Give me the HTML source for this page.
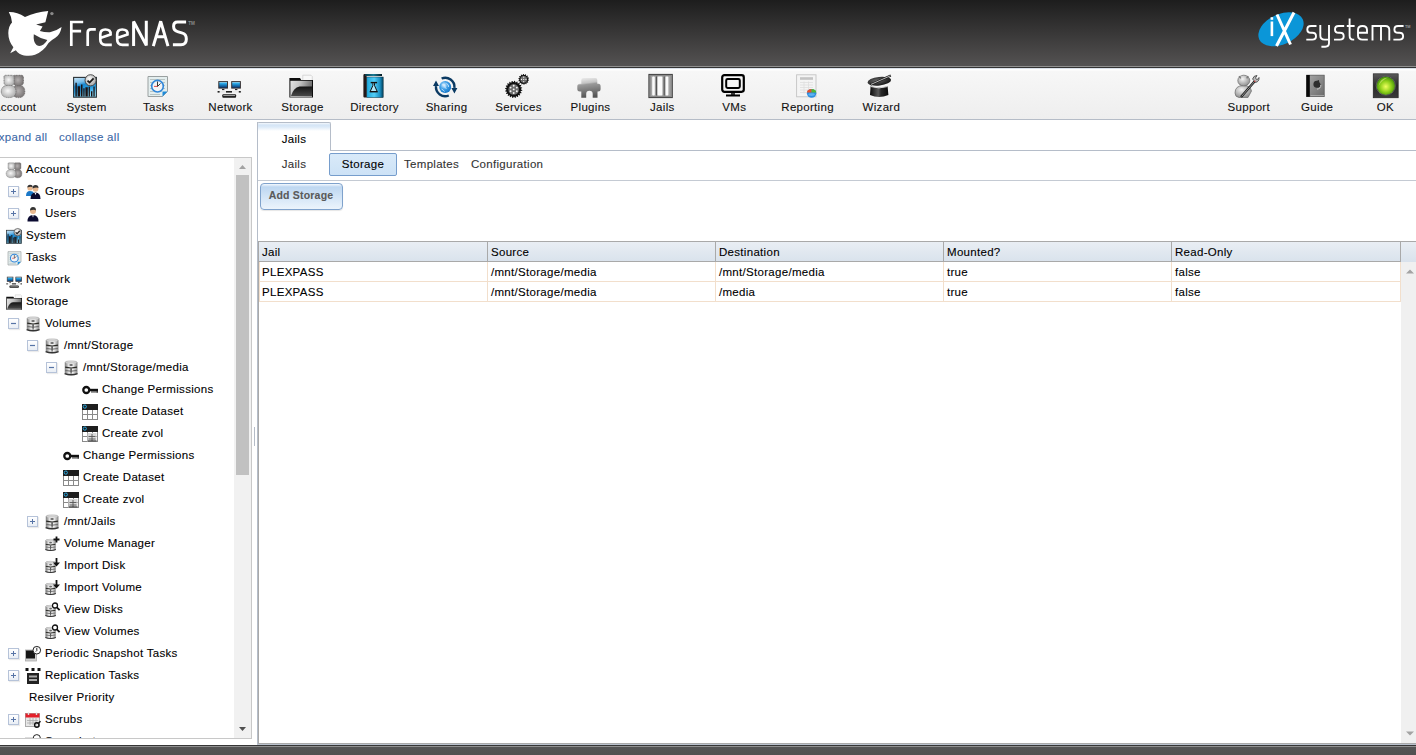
<!DOCTYPE html><html><head><meta charset="utf-8"><style>
*{box-sizing:border-box}
html,body{margin:0;padding:0}
body{width:1416px;height:755px;overflow:hidden;position:relative;background:#fff;font-family:"Liberation Sans", sans-serif;font-size:11.5px;letter-spacing:0.3px;color:#000}
.a{position:absolute}
.t{position:absolute;white-space:nowrap;line-height:14px;height:14px;-webkit-text-stroke:0.1px currentColor}
svg.ic{position:absolute;overflow:visible} symbol{overflow:visible}
</style></head><body><div class="a" style="left:0;top:0;width:1416px;height:66px;background:linear-gradient(#1d1d1d,#545252)"></div>
<div class="a" style="left:0;top:66px;width:1416px;height:1px;background:#8f8f8f"></div>
<div class="a" style="left:0;top:67px;width:1416px;height:1px;background:#333"></div>
<div class="a" style="left:0;top:68px;width:1416px;height:51px;background:linear-gradient(#d9dfe8 0px,#d9dfe8 1px,#fff 1px,#fff 2px,#f7f7f7 3px,#eeeeee 51px)"></div>
<div class="a" style="left:0;top:119px;width:1416px;height:1px;background:#b5bcc7"></div>
<svg class="ic" style="left:0;top:0" width="200" height="66" viewBox="0 0 200 66">
<path fill="#fff" fill-rule="evenodd" d="M8.8 12 Q17 11.8 25 17.1 Q36 12 48.2 11.1 L45.4 22.2 L36.1 24.6 L42.6 26.4 L39.9 31 Q45 32.6 50 32.3 Q56 31 61.6 26.9 Q60.5 33 57.5 36.1 Q55 38.5 52 39.9 L48.5 43 Q44 51 35 54.8 Q30.6 56.5 24 55.5 Q19 54.5 15.8 50.3 L10.2 53.3 L13.4 47.3 Q8.3 41 8.3 33 Q8.5 26 12 22.5 Q11.5 16.5 8.8 12Z M33.8 34.3 Q33 42 36.5 45 Q40 47 43.5 44.5 Q46 42.5 47.3 39.9 Q40 38.5 33.8 34.3Z"/>
<circle cx="51.9" cy="13.6" r="1.7" fill="#8a8a8a"/>
<g fill="none" stroke="#fff" stroke-width="2.7" stroke-linejoin="miter">
<path d="M71.3 46.1 V22 H83.2 M71.3 31.1 H81.1"/>
<path d="M87.7 46.1 V32.5 Q87.7 29.3 91 29.3 H95.8"/>
<path d="M100.3 38 L110.6 34.6 Q111.2 29.5 105.3 29.5 Q100.3 29.5 100.3 34.5 V39.5 Q100.3 44.8 105.6 44.8 H111.8"/>
<path d="M117.2 38 L127.5 34.6 Q128.1 29.5 122.2 29.5 Q117.2 29.5 117.2 34.5 V39.5 Q117.2 44.8 122.5 44.8 H128.7"/>
</g>
<g fill="none" stroke="#fff" stroke-width="3" stroke-linejoin="bevel">
<path d="M133.6 46.1 V21.5 L146.3 45.4 V20.8"/>
<path d="M153.3 46.1 L160.7 21.3 L168 46.1 M155.5 36.8 H165.9"/>
<path d="M186.1 22.1 H177.5 Q173.6 22.1 173.6 26.3 Q173.6 30.6 177.5 31.6 L182.5 33.1 Q186.3 34.2 186.3 38.5 V39.6 Q186.3 44.7 181 44.7 H172.9"/>
</g>
<text x="188.3" y="24.5" font-family="Liberation Sans" font-size="4.6" font-weight="bold" fill="#8a8a8a" letter-spacing="0">TM</text>
</svg>
<svg class="ic" style="left:1250px;top:5px" width="166" height="50" viewBox="1250 5 166 50">
<ellipse cx="1281" cy="29.3" rx="24" ry="15" transform="rotate(-25 1281 29.3)" fill="#0b96d8"/>
<rect x="1270.6" y="21.5" width="2.6" height="14.6" fill="#fff"/><rect x="1270.6" y="17.2" width="2.6" height="2.6" fill="#fff"/>
<path d="M1277 14.5 L1290.5 44.5 M1294 12.5 L1276.5 46" stroke="#fff" stroke-width="3" fill="none"/>
<g fill="none" stroke="#fff" stroke-width="1.9">
<path id="ss" d="M1316.5 26 H1311 Q1307.3 26 1307.3 29.4 Q1307.3 32.8 1311 32.8 H1312.3 Q1316 32.8 1316 36.2 Q1316 39.6 1312.3 39.6 H1306.3"/>
<path d="M1320.3 25.1 V35.5 Q1320.3 39.6 1324.5 39.6 H1329 M1329 25.1 V43 Q1329 46.7 1325.3 46.7 H1321.4"/>
<use href="#ss" x="27.7"/>
<path d="M1349.6 18.4 V35.5 Q1349.6 39.6 1353 39.6 H1354.2 M1346.8 26 H1354.6"/>
<path d="M1358 32.8 H1367 V30 Q1367 26 1362.5 26 Q1358 26 1358 30 V35.5 Q1358 39.6 1362.5 39.6 H1367.8"/>
<path d="M1372.5 40.5 V26 H1385.3 Q1389.3 26 1389.3 30 V40.5 M1381 26 V40.5"/>
<use href="#ss" x="87.1"/>
</g>
<text x="1405" y="28.3" font-family="Liberation Sans" font-size="3.8" font-weight="bold" fill="#9a9a9a" letter-spacing="0">TM</text>
</svg>
<svg width="0" height="0" style="position:absolute"><defs><symbol id="i-account" viewBox="0 0 24 24">
<defs><radialGradient id="gA1" cx=".45" cy=".45" r=".6"><stop offset="0" stop-color="#f8f8f8"/><stop offset="1" stop-color="#aaaaaa"/></radialGradient>
<radialGradient id="gA2" cx=".45" cy=".45" r=".6"><stop offset="0" stop-color="#b4b0b0"/><stop offset="1" stop-color="#767272"/></radialGradient></defs>
<path d="M12 16 Q12 11.3 17.5 11.3 Q23.8 11.3 23.8 17.5 Q23.8 23.6 17.5 23.6 Q12 23.6 12 19Z" fill="url(#gA2)" stroke="#5e5a5a" stroke-width=".8" stroke-dasharray="1 .6"/>
<path d="M12.4 3 Q12.4 1.3 14 1.3 H20.6 Q22.4 1.3 22.4 3.2 V8.5 Q22.4 11.8 17.4 11.8 Q12.4 11.8 12.4 8.5Z" fill="url(#gA2)" stroke="#5e5a5a" stroke-width=".8" stroke-dasharray="1 .6"/>
<path d="M3 3 Q3 1.3 4.6 1.3 H11.4 Q13.2 1.3 13.2 3.2 V8.5 Q13.2 11.8 8.1 11.8 Q3 11.8 3 8.5Z" fill="url(#gA1)" stroke="#6a6a6a" stroke-width=".8" stroke-dasharray="1 .6"/>
<path d="M0.3 17.5 Q0.3 11.3 7.8 11.3 Q15 11.3 15 17.5 Q15 23.6 7.8 23.6 Q0.3 23.6 0.3 17.5Z" fill="url(#gA1)" stroke="#6a6a6a" stroke-width=".8" stroke-dasharray="1 .6"/>
</symbol><symbol id="i-system" viewBox="0 0 24 24">
<defs><linearGradient id="gS1" x1="0" y1="0" x2=".3" y2="1"><stop offset="0" stop-color="#d0e8f8"/><stop offset=".3" stop-color="#78bce8"/><stop offset=".45" stop-color="#1a88d0"/><stop offset=".7" stop-color="#2a9ee0"/><stop offset="1" stop-color="#8adcfc"/></linearGradient>
<radialGradient id="gS2" cx=".4" cy=".35" r=".7"><stop offset="0" stop-color="#fcfcfc"/><stop offset="1" stop-color="#a0a0a0"/></radialGradient></defs>
<rect x="0.6" y="3.4" width="22.8" height="19.8" fill="url(#gS1)" stroke="#2a3236" stroke-width="1.1"/>
<path d="M2.4 22.6 V8.8 h1.4 V22.6Z M4.6 22.6 V12.2 h2.6 V22.6Z M8 22.6 V10.5 h1.5 V22.6Z M10.3 22.6 V14.3 h1.3 V22.6Z M12.4 22.6 V13.2 h2.4 V22.6Z M15.6 22.6 V12.8 h1.3 V22.6Z M18 22.6 V17.2 h1.4 V22.6Z M20.4 22.6 V12.5 h1.3 V22.6Z" fill="#1c1212"/>
<circle cx="17.6" cy="6.3" r="5.6" fill="url(#gS2)" stroke="#3a3a3a" stroke-width=".9"/>
<path d="M14.5 6.6 l2.1 2 l4-4.2" fill="none" stroke="#1a1a1a" stroke-width="1.8"/>
</symbol><symbol id="i-tasks" viewBox="0 0 24 24">
<path d="M3 2.5 h19.5 v15 l-5 5 H3Z" fill="#e4eeee" stroke="#9aa0a0" stroke-width="1"/>
<path d="M5 5.5 h15 M5 8.5 h15 M5 11.5 h15 M5 14.5 h15 M5 17.5 h12 M5 20.5 h10" stroke="#b9c4c4" stroke-width="1"/>
<path d="M17.5 22.5 l5-5 h-5Z" fill="#1e8ad8"/>
<circle cx="12.5" cy="12.2" r="5.8" fill="#f2f4f6" stroke="#2f86da" stroke-width="1.6"/>
<path d="M12.5 12.5 V7.5 M12.5 12.5 l3-3" stroke="#222" stroke-width=".9"/><path d="M12.5 12.4 h-3.5" stroke="#e03838" stroke-width=".9"/>
</symbol><symbol id="i-network" viewBox="0 0 24 24">
<defs><linearGradient id="gN1" x1="0" y1="0" x2="0" y2="1"><stop offset="0" stop-color="#d8f4ff"/><stop offset=".3" stop-color="#28a8e8"/><stop offset="1" stop-color="#022a68"/></linearGradient>
<linearGradient id="gN2" x1="0" y1="0" x2="0" y2="1"><stop offset="0" stop-color="#e0e0e0"/><stop offset="1" stop-color="#303030"/></linearGradient></defs>
<rect x="1.8" y="7.6" width="8.7" height="6.5" fill="url(#gN1)" stroke="#3a3434" stroke-width="1"/>
<rect x="14.7" y="7.6" width="8.7" height="6.5" fill="url(#gN1)" stroke="#3a3434" stroke-width="1"/>
<path d="M5 15.6 h2.4 M18 15.6 h2.4" stroke="#111" stroke-width="1"/>
<rect x="0.3" y="16.9" width="23.9" height="1.8" fill="#e8e8e8"/>
<rect x="0.6" y="17" width="2" height="1.6" fill="#222"/><rect x="9" y="17" width="6" height="1.6" fill="#222"/><rect x="21.8" y="17" width="2" height="1.6" fill="#222"/>
<rect x="5.3" y="20.2" width="13.8" height="3.6" rx="1" fill="#1a1a1a"/><rect x="6.3" y="21" width="11.8" height="1.3" fill="url(#gN2)"/>
</symbol><symbol id="i-storage" viewBox="0 0 24 24">
<defs><linearGradient id="gF1" x1="0" y1="0" x2="1" y2=".3"><stop offset="0" stop-color="#e4e4e4"/><stop offset=".45" stop-color="#c4c4c4"/><stop offset="1" stop-color="#6a6a6a"/></linearGradient>
<linearGradient id="gF2" x1="0" y1="0" x2="0" y2="1"><stop offset="0" stop-color="#141414"/><stop offset="1" stop-color="#4a4a4a"/></linearGradient></defs>
<path d="M13.8 1.2 h8.2 l1.3 1.3 V7 H13.8Z" fill="#f8f8f8" stroke="#c4c4c4" stroke-width=".6"/>
<path d="M0.4 4.1 H11 L12.2 6 H24 V23.6 H0.4Z" fill="#0e0e0e"/>
<rect x="1.4" y="6.8" width="21.6" height="16" fill="url(#gF1)"/>
<path d="M1.8 22.4 Q4.5 13.2 10.5 12.4 H23 V22.4Z" fill="url(#gF2)"/>
<path d="M1.4 22.7 H23" stroke="#e8e8e8" stroke-width=".6"/>
</symbol><symbol id="i-directory" viewBox="0 0 24 24">
<defs><linearGradient id="gD1" x1="0" y1="0" x2="1" y2="0"><stop offset="0" stop-color="#1ea8dc"/><stop offset=".45" stop-color="#52cdf6"/><stop offset=".8" stop-color="#1a90c4"/><stop offset="1" stop-color="#04405c"/></linearGradient>
<linearGradient id="gD2" x1="0" y1="0" x2="1" y2="0"><stop offset="0" stop-color="#0a3a48"/><stop offset=".5" stop-color="#1a7a94"/><stop offset="1" stop-color="#061a22"/></linearGradient></defs>
<path d="M2.4 1.2 Q2.4 0 3.6 0 H21 V2 H5.8 V23.6 H3.4 Q2.4 23.6 2.4 22.6Z" fill="#221818"/>
<rect x="4" y="0" width="17" height="2" fill="url(#gD2)"/>
<rect x="5.8" y="2" width="16.4" height="1" fill="#fafafa"/>
<rect x="5.8" y="3" width="16.4" height="20.6" fill="url(#gD1)" stroke="#0e2a36" stroke-width=".5"/>
<path d="M11.9 9.2 V11.5 L9.2 17.5 H16.2 L13.5 11.5 V9.2" fill="#aee6f8" stroke="#111" stroke-width="1"/>
<rect x="9.7" y="7.9" width="6.4" height="1.4" fill="#111"/><rect x="8.7" y="17.3" width="8" height="1.1" fill="#161010"/>
</symbol><symbol id="i-sharing" viewBox="0 0 24 24">
<defs><radialGradient id="gSh" cx=".4" cy=".35" r=".65"><stop offset="0" stop-color="#e6f4ff"/><stop offset=".5" stop-color="#3fa0e8"/><stop offset="1" stop-color="#1878c8"/></radialGradient></defs>
<circle cx="12.2" cy="13" r="6" fill="url(#gSh)"/>
<path d="M9 11 q2-1.5 3 0.5 q-1 2.5 1.5 3 M13.5 9.5 q2.5 1 2 3.5 M8.5 15 q2 1 3 2.5" stroke="#d8eeff" stroke-width=".8" fill="none"/>
<path d="M8.6 4.5 A9.2 9.2 0 0 1 21.4 13.8" fill="none" stroke="#0b3a63" stroke-width="2.4"/>
<path d="M15.8 21.5 A9.2 9.2 0 0 1 3.0 12.2" fill="none" stroke="#0b3a63" stroke-width="2.4"/>
<path d="M18.4 14 L24.4 14 L21.4 19.5Z M0 12 L6 12 L3 6.5Z" fill="#0b3a63"/>
</symbol><symbol id="i-services" viewBox="0 0 24 24"><polygon points="16.00,15.40 17.27,16.07 17.19,16.75 15.80,17.10 15.64,17.66 16.65,18.69 16.36,19.30 14.92,19.21 14.61,19.69 15.24,20.99 14.78,21.48 13.44,20.95 12.99,21.31 13.19,22.73 12.60,23.06 11.49,22.14 10.96,22.34 10.71,23.76 10.05,23.89 9.27,22.68 8.70,22.70 8.03,23.97 7.35,23.89 7.00,22.50 6.44,22.34 5.41,23.35 4.80,23.06 4.89,21.62 4.41,21.31 3.11,21.94 2.62,21.48 3.15,20.14 2.79,19.69 1.37,19.89 1.04,19.30 1.96,18.19 1.76,17.66 0.34,17.41 0.21,16.75 1.42,15.97 1.40,15.40 0.13,14.73 0.21,14.05 1.60,13.70 1.76,13.14 0.75,12.11 1.04,11.50 2.48,11.59 2.79,11.11 2.16,9.81 2.62,9.32 3.96,9.85 4.41,9.49 4.21,8.07 4.80,7.74 5.91,8.66 6.44,8.46 6.69,7.04 7.35,6.91 8.13,8.12 8.70,8.10 9.37,6.83 10.05,6.91 10.40,8.30 10.96,8.46 11.99,7.45 12.60,7.74 12.51,9.18 12.99,9.49 14.29,8.86 14.78,9.32 14.25,10.66 14.61,11.11 16.03,10.91 16.36,11.50 15.44,12.61 15.64,13.14 17.06,13.39 17.19,14.05 15.98,14.83" fill="#111"/><circle cx="8.7" cy="15.4" r="5.3" fill="#6e6e6e"/><circle cx="8.70" cy="19.00" r="0.95" fill="#f4f4f4"/><circle cx="5.58" cy="17.20" r="0.95" fill="#f4f4f4"/><circle cx="5.58" cy="13.60" r="0.95" fill="#f4f4f4"/><circle cx="8.70" cy="11.80" r="0.95" fill="#f4f4f4"/><circle cx="11.82" cy="13.60" r="0.95" fill="#f4f4f4"/><circle cx="11.82" cy="17.20" r="0.95" fill="#f4f4f4"/><circle cx="8.7" cy="15.4" r="0.95" fill="#f4f4f4"/><polygon points="23.10,5.40 24.07,6.00 23.96,6.60 22.85,6.85 22.66,7.31 23.27,8.27 22.92,8.77 21.81,8.51 21.44,8.84 21.57,9.97 21.04,10.27 20.15,9.55 19.68,9.69 19.30,10.77 18.70,10.80 18.21,9.77 17.72,9.69 16.92,10.50 16.36,10.27 16.36,9.13 15.96,8.84 14.88,9.22 14.48,8.77 14.97,7.74 14.74,7.31 13.60,7.18 13.44,6.60 14.33,5.89 14.30,5.40 13.33,4.80 13.44,4.20 14.55,3.95 14.74,3.49 14.13,2.53 14.48,2.03 15.59,2.29 15.96,1.96 15.83,0.83 16.36,0.53 17.25,1.25 17.72,1.11 18.10,0.03 18.70,0.00 19.19,1.03 19.68,1.11 20.48,0.30 21.04,0.53 21.04,1.67 21.44,1.96 22.52,1.58 22.92,2.03 22.43,3.06 22.66,3.49 23.80,3.62 23.96,4.20 23.07,4.91" fill="#111"/><circle cx="18.7" cy="5.4" r="3.3" fill="#6e6e6e"/><circle cx="18.70" cy="7.64" r="0.6" fill="#f4f4f4"/><circle cx="16.46" cy="5.40" r="0.6" fill="#f4f4f4"/><circle cx="18.70" cy="3.16" r="0.6" fill="#f4f4f4"/><circle cx="20.94" cy="5.40" r="0.6" fill="#f4f4f4"/><circle cx="18.7" cy="5.4" r="0.6" fill="#f4f4f4"/></symbol><symbol id="i-plugins" viewBox="0 0 24 24">
<defs><linearGradient id="gP1" x1="0" y1="0" x2=".15" y2="1"><stop offset="0" stop-color="#f0f0f0"/><stop offset=".3" stop-color="#c4c4c4"/><stop offset=".38" stop-color="#9a9a9a"/><stop offset="1" stop-color="#555"/></linearGradient></defs>
<path d="M6.5 4 H18.5 Q20.3 4 20.3 6 V9.8 H21.5 Q23.6 9.8 23.6 12.5 V15 Q23.6 17.5 21 17.5 H20.5 V23.8 H15.7 V20 Q15.7 16.8 12.4 16.8 Q9.2 16.8 9.2 20 V23.8 H4.3 V17.5 H3 Q0.3 17.5 0.3 15 V12.5 Q0.3 9.8 3 9.8 H4.3 V6 Q4.3 4 6.5 4Z" fill="url(#gP1)"/>
</symbol><symbol id="i-jails" viewBox="0 0 24 24">
<rect x="-0.1" y="0.4" width="23.4" height="23.2" fill="#a4a4a4" stroke="#3c3c3c" stroke-width="1"/>
<rect x="1.2" y="1.7" width="20.8" height="20.6" fill="none" stroke="#7a7a7a" stroke-width=".6"/>
<rect x="3.2" y="2.6" width="2.6" height="18.8" rx="1" fill="#fbfbfb"/>
<rect x="8.6" y="2.6" width="4.8" height="18.8" rx="1" fill="#fbfbfb"/>
<rect x="16.6" y="2.6" width="2.8" height="18.8" rx="1" fill="#fbfbfb"/>
<path d="M7.4 2.4 V21.6 M15.2 2.4 V21.6" stroke="#4a4a4a" stroke-width="1"/>
</symbol><symbol id="i-vms" viewBox="0 0 24 24">
<rect x="1.2" y="1.2" width="21.6" height="16.6" rx="2.2" fill="none" stroke="#000" stroke-width="2.2"/>
<rect x="5.2" y="5" width="13.6" height="9" rx="1.4" fill="none" stroke="#000" stroke-width="2"/>
<path d="M11 19 v2 M13 19 v2" stroke="#000" stroke-width="1.5"/><rect x="5" y="20.5" width="14" height="2" fill="#000"/>
</symbol><symbol id="i-reporting" viewBox="0 0 24 24">
<rect x="2.6" y="0.8" width="19.4" height="22" fill="#f4f4f4" stroke="#c4c4c4" stroke-width=".9"/>
<rect x="6" y="3.2" width="13" height="2.6" fill="#c4c4c4"/>
<path d="M6 8.5 h13 M6 11 h13 M6 13.5 h13 M6 16 h9 M6 18.5 h8 M10 7.5 v12 M14.5 7.5 v8" stroke="#dedede" stroke-width=".8"/>
<ellipse cx="17.6" cy="19.3" rx="4.7" ry="4.4" fill="#2e8ee0"/>
<path d="M12.9 18.6 A4.7 4 0 0 1 17.6 14.9 L17.6 18.6Z" fill="#e8502a"/>
<path d="M17.6 14.9 A4.7 4 0 0 1 22.3 18.6 L17.6 18.6Z" fill="#52b830"/>
<ellipse cx="17.6" cy="20.6" rx="3.2" ry="1.4" fill="#8fd8ff" opacity=".5"/>
</symbol><symbol id="i-wizard" viewBox="0 0 24 24">
<defs><linearGradient id="gW1" x1="0" y1="0" x2="1" y2="0"><stop offset="0" stop-color="#0a0a0a"/><stop offset=".45" stop-color="#5a5a5a"/><stop offset=".6" stop-color="#2a2a2a"/><stop offset="1" stop-color="#0a0a0a"/></linearGradient>
<radialGradient id="gW2" cx=".4" cy=".4" r=".6"><stop offset="0" stop-color="#666"/><stop offset="1" stop-color="#1a1a1a"/></radialGradient></defs>
<ellipse cx="11.3" cy="7.2" rx="11.8" ry="4.3" transform="rotate(-6 11.3 7.2)" fill="url(#gW2)"/>
<path d="M2.6 12.2 Q11 14.8 19.6 12.2 L20.4 21 Q11 25.2 2 21Z" fill="url(#gW1)"/>
<path d="M3 12.6 Q11 15.2 19.4 12.6" stroke="#d8d8d8" stroke-width="1" fill="none"/>
<path d="M2.5 10.8 L22.8 1.6" stroke="#1a1a1a" stroke-width="2.2"/><path d="M3 10.4 L22.3 1.8" stroke="#e0e0e0" stroke-width=".8"/>
</symbol><symbol id="i-support" viewBox="0 0 24 24">
<defs><radialGradient id="gSu" cx=".4" cy=".35" r=".7"><stop offset="0" stop-color="#f4f4f4"/><stop offset="1" stop-color="#8a8a8a"/></radialGradient></defs>
<path d="M0 19 Q0 11.5 8.5 11.5 Q15.5 11.5 16.5 17 L13 23.5 H4 Q0 23 0 19Z" fill="url(#gSu)" stroke="#6a6a6a" stroke-width=".7"/>
<ellipse cx="8.8" cy="6.6" rx="6" ry="5.4" fill="url(#gSu)" stroke="#6a6a6a" stroke-width=".7"/>
<path d="M4 2.2 l1.8 2.2 M13.2 2 l-1.5 2.4" stroke="#7a7a7a" stroke-width="1.4"/>
<path d="M6 23 L19.5 7.5" stroke="#1a1a1a" stroke-width="2.4"/><path d="M6.6 22.4 L19 8.1" stroke="#c8c8c8" stroke-width=".7"/>
<path d="M17.6 5 Q18.5 1.5 22 1.5 L20.5 4 L22 5.8 L24 3.5 Q24.5 7.5 20.5 8.5Z" fill="#b8b8b8" stroke="#3a3a3a" stroke-width=".8"/>
<circle cx="19.8" cy="7.2" r=".8" fill="#d04040"/>
</symbol><symbol id="i-guide" viewBox="0 0 24 24">
<defs><linearGradient id="gG1" x1="0" y1="0" x2="1" y2="1"><stop offset="0" stop-color="#a8a8a8"/><stop offset="1" stop-color="#6a6a6a"/></linearGradient></defs>
<rect x="2.6" y="1.2" width="17.6" height="21.4" fill="url(#gG1)" stroke="#5a5a5a" stroke-width=".8"/>
<rect x="2.4" y="1" width="3.4" height="21.8" fill="#080808"/>
<path d="M6.5 21.6 H20" stroke="#ccc" stroke-width=".6"/>
<path d="M9.5 9.5 Q10 6.5 13 6.8 L15 6 L15.2 8 Q17.2 9.5 16.5 12.5 Q14.5 14.5 11.5 13.5 Q9 12.5 9.5 9.5Z" fill="#2e2e2e"/>
<path d="M16.8 11 Q17 14.5 13 15.2" stroke="#d8d8d8" stroke-width=".8" fill="none"/>
</symbol><symbol id="i-ok" viewBox="0 0 24 24">
<defs><radialGradient id="gOk" cx=".5" cy=".55" r=".55"><stop offset="0" stop-color="#f0ff60"/><stop offset=".55" stop-color="#8ed01a"/><stop offset="1" stop-color="#3c8a08"/></radialGradient>
<linearGradient id="gOk2" x1="0" y1="0" x2="0" y2="1"><stop offset="0" stop-color="#5a5a5a"/><stop offset=".5" stop-color="#2a2a2a"/><stop offset="1" stop-color="#3a3a3a"/></linearGradient></defs>
<rect x="1.2" y="-0.2" width="25" height="24" fill="url(#gOk2)" stroke="#1a1a1a" stroke-width=".6"/>
<circle cx="13.8" cy="11.7" r="10" fill="#1a1a1a"/><circle cx="13.8" cy="11.7" r="9.2" fill="url(#gOk)"/>
<path d="M6.5 12 Q8 4 16 3.5 Q10 6 6.5 12Z" fill="#d8f07a" opacity=".6"/>
<circle cx="13.8" cy="11.7" r="9.6" fill="none" stroke="#9a9a9a" stroke-width=".5"/>
</symbol><symbol id="t-disk" viewBox="0 0 16 16">
<defs><linearGradient id="gDk" x1="0" y1="0" x2="1" y2="0"><stop offset="0" stop-color="#7a7a7a"/><stop offset=".3" stop-color="#e6e6e6"/><stop offset=".65" stop-color="#f0f0f0"/><stop offset="1" stop-color="#8a8a8a"/></linearGradient></defs>
<path d="M2 2.6 Q2 1 8.1 1 Q14.2 1 14.2 2.6 V13.3 Q14.2 14.8 8.1 14.8 Q2 14.8 2 13.3Z" fill="url(#gDk)" stroke="#9a9a9a" stroke-width=".6"/>
<ellipse cx="8.1" cy="2.4" rx="5.6" ry="1.2" fill="#cfcfcf"/>
<ellipse cx="8.1" cy="5.0" rx="1.8" ry="1.1" fill="#6a6a6a"/>
<path d="M2.2 7.2 Q8.1 8.8 14 7.2" stroke="#2a2a26" stroke-width="1.2" fill="none"/>
<path d="M2.3 10.5 Q8.1 11.9 13.9 10.5" stroke="#6a6a6a" stroke-width="1" fill="none"/>
<path d="M7.2 8.2 H9 L8.6 13.8 H7.6Z" fill="#5a5a5a"/>
<path d="M1.6 13.6 Q8.1 16 14.6 13.6" stroke="#333" stroke-width="1.4" fill="none"/>
</symbol><symbol id="t-groups" viewBox="0 0 16 16">
<circle cx="5" cy="4" r="2.6" fill="#e8b890"/><path d="M2.3 3.5 Q2.5 0.8 5 0.8 Q7.7 0.8 7.7 3.2 Q6 2 2.3 3.5Z" fill="#333"/>
<path d="M1 12 Q1 7 5 7 Q8 7 9 9 V12Z" fill="#1a78c8"/>
<circle cx="10.5" cy="4.8" r="2.9" fill="#e8b890"/><path d="M7.5 4.4 Q7.6 1 10.5 1 Q13.5 1 13.5 4 Q11.5 2.8 7.5 4.4Z" fill="#333"/>
<path d="M5.5 15 Q5.5 8.5 10.5 8.5 Q15.5 8.5 15.5 15Z" fill="#0a0a30"/><path d="M9.7 9 l.8 2.2 l.8-2.2Z" fill="#fff"/>
</symbol><symbol id="t-users" viewBox="0 0 16 16">
<circle cx="8" cy="5" r="3" fill="#e8b890"/><path d="M5 4.6 Q5 1 8 1 Q11 1 11 4.4 Q9 3 5 4.6Z" fill="#333"/>
<path d="M2.5 15.5 Q2.5 9 8 9 Q13.5 9 13.5 15.5Z" fill="#0a0a30"/><path d="M7.2 9.3 l.8 2.2 l.8-2.2Z" fill="#fff"/>
</symbol><symbol id="t-key" viewBox="0 0 16 16">
<circle cx="4.3" cy="8" r="3" fill="none" stroke="#111" stroke-width="2.3"/>
<path d="M7 6.8 H16 V9.2 H7Z" fill="#111"/><path d="M10 9 v1.8 M12 9 v1.8 M14 9 v1.8 M15.3 9 v1.8" stroke="#111" stroke-width="1"/>
</symbol><symbol id="t-dataset" viewBox="0 0 16 16">
<rect x="0" y="0" width="16" height="6" fill="#1e1e1e"/>
<circle cx="2.8" cy="2.6" r="1.6" fill="none" stroke="#2aa8e0" stroke-width="1"/>
<path d="M0.5 6 V16 M5.5 6 V16 M10.5 6 V16 M15.5 6 V16 M0 10.5 H16 M0 15.5 H16" stroke="#8a8a8a" stroke-width="1"/>
</symbol><symbol id="t-zvol" viewBox="0 0 16 16">
<rect x="0" y="0" width="16" height="6" fill="#1e1e1e"/>
<circle cx="2.8" cy="2.6" r="1.6" fill="none" stroke="#2aa8e0" stroke-width="1"/>
<path d="M0.5 6 V16 M5.5 6 V16 M10.5 6 V16 M15.5 6 V16 M0 10.5 H16 M0 15.5 H16" stroke="#8a8a8a" stroke-width="1"/>
<rect x="5.5" y="7" width="9" height="8.5" fill="#d8d8d8"/><path d="M10 8 v7 M6.5 10.5 h7 M6.5 13 h7" stroke="#555" stroke-width=".9"/><path d="M6 15 h8.5" stroke="#222" stroke-width="1"/>
</symbol><symbol id="t-vm" viewBox="0 0 16 16"><use href="#t-disk" x="0" y="2" width="13" height="14"/>
<path d="M12.5 0.5 v6 M9.5 3.5 h6" stroke="#111" stroke-width="1.8"/></symbol><symbol id="t-import" viewBox="0 0 16 16"><use href="#t-disk" x="0" y="2" width="13" height="14"/>
<path d="M12.5 0 v6" stroke="#111" stroke-width="1.8"/><path d="M9 4.5 l3.5 4 l3.5-4Z" fill="#111"/></symbol><symbol id="t-view" viewBox="0 0 16 16"><use href="#t-disk" x="0" y="2" width="13" height="14"/>
<circle cx="11" cy="3.5" r="2.5" fill="#fff" stroke="#111" stroke-width="1.3"/><path d="M12.8 5.3 l2.8 2.8" stroke="#111" stroke-width="1.8"/></symbol><symbol id="t-periodic" viewBox="0 0 16 16">
<rect x="0.5" y="4" width="11" height="11" fill="#d0d0d0" stroke="#aaa" stroke-width=".8"/>
<rect x="1" y="4.5" width="9" height="8" fill="#151515"/>
<circle cx="11.8" cy="4.2" r="3.8" fill="#fff" stroke="#222" stroke-width="1"/><path d="M11.8 1.8 v2.8 l-1 1" stroke="#111" stroke-width=".9" fill="none"/>
</symbol><symbol id="t-repl" viewBox="0 0 16 16">
<rect x="0.5" y="0" width="3" height="3" fill="#111"/><rect x="6.5" y="0" width="3" height="3" fill="#111"/><rect x="12.5" y="0" width="3" height="3" fill="#111"/>
<rect x="2" y="5" width="12" height="11" fill="#222"/><rect x="4" y="7.5" width="8" height="2" fill="#aaa"/><rect x="4" y="11" width="8" height="2" fill="#aaa"/>
</symbol><symbol id="t-scrubs" viewBox="0 0 16 16">
<rect x="0.5" y="1.5" width="14" height="13" fill="#e8e8e8" stroke="#999" stroke-width=".8"/>
<rect x="0.5" y="1.5" width="14" height="4" fill="#e3202a"/>
<path d="M3.5 0.5 v2.5 M11.5 0.5 v2.5" stroke="#ddd" stroke-width="1.4"/>
<path d="M2 8.5 h11 M2 11 h11 M5 6 v7 M8 6 v7 M11 6 v7" stroke="#aaa" stroke-width=".8"/>
<circle cx="11.8" cy="13" r="2.2" fill="none" stroke="#111" stroke-width="1.4"/><path d="M13 11.8 l2.5-2.5" stroke="#111" stroke-width="1.5"/>
</symbol><symbol id="t-snap" viewBox="0 0 16 16">
<rect x="0.5" y="4" width="11" height="11" fill="#e0e0e0" stroke="#aaa" stroke-width=".8"/>
<circle cx="11.8" cy="4.2" r="3.6" fill="#fff" stroke="#222" stroke-width="1"/>
</symbol></defs></svg>
<svg class="ic" style="left:0.8px;top:74px" width="24" height="24"><use href="#i-account"/></svg>
<div class="t" style="left:-45.5px;width:120px;text-align:center;top:100px;color:#111">Account</div>
<svg class="ic" style="left:72.8px;top:74px" width="24" height="24"><use href="#i-system"/></svg>
<div class="t" style="left:26.5px;width:120px;text-align:center;top:100px;color:#111">System</div>
<svg class="ic" style="left:144.8px;top:74px" width="24" height="24"><use href="#i-tasks"/></svg>
<div class="t" style="left:98.5px;width:120px;text-align:center;top:100px;color:#111">Tasks</div>
<svg class="ic" style="left:216.8px;top:74px" width="24" height="24"><use href="#i-network"/></svg>
<div class="t" style="left:170.5px;width:120px;text-align:center;top:100px;color:#111">Network</div>
<svg class="ic" style="left:288.8px;top:74px" width="24" height="24"><use href="#i-storage"/></svg>
<div class="t" style="left:242.5px;width:120px;text-align:center;top:100px;color:#111">Storage</div>
<svg class="ic" style="left:360.8px;top:74px" width="24" height="24"><use href="#i-directory"/></svg>
<div class="t" style="left:314.5px;width:120px;text-align:center;top:100px;color:#111">Directory</div>
<svg class="ic" style="left:432.8px;top:74px" width="24" height="24"><use href="#i-sharing"/></svg>
<div class="t" style="left:386.5px;width:120px;text-align:center;top:100px;color:#111">Sharing</div>
<svg class="ic" style="left:504.8px;top:74px" width="24" height="24"><use href="#i-services"/></svg>
<div class="t" style="left:458.5px;width:120px;text-align:center;top:100px;color:#111">Services</div>
<svg class="ic" style="left:576.8px;top:74px" width="24" height="24"><use href="#i-plugins"/></svg>
<div class="t" style="left:530.5px;width:120px;text-align:center;top:100px;color:#111">Plugins</div>
<svg class="ic" style="left:648.6px;top:74px" width="24" height="24"><use href="#i-jails"/></svg>
<div class="t" style="left:602.3px;width:120px;text-align:center;top:100px;color:#111">Jails</div>
<svg class="ic" style="left:720.6px;top:74px" width="24" height="24"><use href="#i-vms"/></svg>
<div class="t" style="left:674.3px;width:120px;text-align:center;top:100px;color:#111">VMs</div>
<svg class="ic" style="left:793.9px;top:74px" width="24" height="24"><use href="#i-reporting"/></svg>
<div class="t" style="left:747.6px;width:120px;text-align:center;top:100px;color:#111">Reporting</div>
<svg class="ic" style="left:867.7px;top:74px" width="24" height="24"><use href="#i-wizard"/></svg>
<div class="t" style="left:821.4px;width:120px;text-align:center;top:100px;color:#111">Wizard</div>
<svg class="ic" style="left:1235.1px;top:74px" width="24" height="24"><use href="#i-support"/></svg>
<div class="t" style="left:1188.8px;width:120px;text-align:center;top:100px;color:#111">Support</div>
<svg class="ic" style="left:1303.5px;top:74px" width="24" height="24"><use href="#i-guide"/></svg>
<div class="t" style="left:1257.2px;width:120px;text-align:center;top:100px;color:#111">Guide</div>
<svg class="ic" style="left:1371.7px;top:74px" width="24" height="24"><use href="#i-ok"/></svg>
<div class="t" style="left:1325.4px;width:120px;text-align:center;top:100px;color:#111">OK</div>
<div class="t" style="left:-8px;top:130px;color:#3d68a6">expand all</div>
<div class="t" style="left:59px;top:130px;color:#3d68a6">collapse all</div>
<div class="a" style="left:0;top:157px;width:252px;height:582px;border:1px solid #c8c8c8;border-left:none"></div>
<div class="a" style="left:234px;top:158px;width:17px;height:580px;background:#f1f1f1"></div>
<div class="a" style="left:236px;top:175px;width:13px;height:300px;background:#c1c1c1"></div>
<svg class="ic" style="left:239px;top:165px" width="7" height="4"><path d="M0 4 L3.5 0 L7 4Z" fill="#a3a3a3"/></svg>
<svg class="ic" style="left:239px;top:727px" width="7" height="4"><path d="M0 0 L3.5 4 L7 0Z" fill="#505050"/></svg>
<div class="a" style="left:254px;top:427px;width:1px;height:19px;background:#b5bcc7"></div>
<div class="a" style="left:0;top:158px;width:234px;height:580px;overflow:hidden">
<svg class="ic" style="left:6px;top:3.9px" width="16" height="16" viewBox="0 0 16 16"><use href="#i-account" width="16" height="16"/></svg>
<div class="t" style="left:26px;top:4.4px;color:#000">Account</div>
<div class="a" style="left:8px;top:27.9px;width:11px;height:11px;border:1px solid #b6c3d9;background:linear-gradient(#fff,#e9eef5);box-shadow:1px 1px 1px rgba(0,0,0,.08)"></div>
<svg class="ic" style="left:8px;top:27.9px" width="11" height="11"><path d="M3 5.5 h5 M5.5 3 v5" stroke="#5774a6" stroke-width="1"/></svg>
<svg class="ic" style="left:25px;top:25.9px" width="16" height="16" viewBox="0 0 16 16"><use href="#t-groups" width="16" height="16"/></svg>
<div class="t" style="left:45px;top:26.4px;color:#000">Groups</div>
<div class="a" style="left:8px;top:49.9px;width:11px;height:11px;border:1px solid #b6c3d9;background:linear-gradient(#fff,#e9eef5);box-shadow:1px 1px 1px rgba(0,0,0,.08)"></div>
<svg class="ic" style="left:8px;top:49.9px" width="11" height="11"><path d="M3 5.5 h5 M5.5 3 v5" stroke="#5774a6" stroke-width="1"/></svg>
<svg class="ic" style="left:25px;top:47.9px" width="16" height="16" viewBox="0 0 16 16"><use href="#t-users" width="16" height="16"/></svg>
<div class="t" style="left:45px;top:48.4px;color:#000">Users</div>
<svg class="ic" style="left:6px;top:69.9px" width="16" height="16" viewBox="0 0 16 16"><use href="#i-system" width="16" height="16"/></svg>
<div class="t" style="left:26px;top:70.4px;color:#000">System</div>
<svg class="ic" style="left:6px;top:91.9px" width="16" height="16" viewBox="0 0 16 16"><use href="#i-tasks" width="16" height="16"/></svg>
<div class="t" style="left:26px;top:92.4px;color:#000">Tasks</div>
<svg class="ic" style="left:6px;top:113.9px" width="16" height="16" viewBox="0 0 16 16"><use href="#i-network" width="16" height="16"/></svg>
<div class="t" style="left:26px;top:114.4px;color:#000">Network</div>
<svg class="ic" style="left:6px;top:135.9px" width="16" height="16" viewBox="0 0 16 16"><use href="#i-storage" width="16" height="16"/></svg>
<div class="t" style="left:26px;top:136.4px;color:#000">Storage</div>
<div class="a" style="left:8px;top:159.9px;width:11px;height:11px;border:1px solid #b6c3d9;background:linear-gradient(#fff,#e9eef5);box-shadow:1px 1px 1px rgba(0,0,0,.08)"></div>
<svg class="ic" style="left:8px;top:159.9px" width="11" height="11"><path d="M3 5.5 h5" stroke="#5774a6" stroke-width="1.2"/></svg>
<svg class="ic" style="left:25px;top:157.9px" width="16" height="16" viewBox="0 0 16 16"><use href="#t-disk" width="16" height="16"/></svg>
<div class="t" style="left:45px;top:158.4px;color:#000">Volumes</div>
<div class="a" style="left:27px;top:181.9px;width:11px;height:11px;border:1px solid #b6c3d9;background:linear-gradient(#fff,#e9eef5);box-shadow:1px 1px 1px rgba(0,0,0,.08)"></div>
<svg class="ic" style="left:27px;top:181.9px" width="11" height="11"><path d="M3 5.5 h5" stroke="#5774a6" stroke-width="1.2"/></svg>
<svg class="ic" style="left:44px;top:179.9px" width="16" height="16" viewBox="0 0 16 16"><use href="#t-disk" width="16" height="16"/></svg>
<div class="t" style="left:64px;top:180.4px;color:#000">/mnt/Storage</div>
<div class="a" style="left:46px;top:203.9px;width:11px;height:11px;border:1px solid #b6c3d9;background:linear-gradient(#fff,#e9eef5);box-shadow:1px 1px 1px rgba(0,0,0,.08)"></div>
<svg class="ic" style="left:46px;top:203.9px" width="11" height="11"><path d="M3 5.5 h5" stroke="#5774a6" stroke-width="1.2"/></svg>
<svg class="ic" style="left:63px;top:201.9px" width="16" height="16" viewBox="0 0 16 16"><use href="#t-disk" width="16" height="16"/></svg>
<div class="t" style="left:83px;top:202.4px;color:#000">/mnt/Storage/media</div>
<svg class="ic" style="left:82px;top:223.9px" width="16" height="16" viewBox="0 0 16 16"><use href="#t-key" width="16" height="16"/></svg>
<div class="t" style="left:102px;top:224.4px;color:#000">Change Permissions</div>
<svg class="ic" style="left:82px;top:245.9px" width="16" height="16" viewBox="0 0 16 16"><use href="#t-dataset" width="16" height="16"/></svg>
<div class="t" style="left:102px;top:246.4px;color:#000">Create Dataset</div>
<svg class="ic" style="left:82px;top:267.9px" width="16" height="16" viewBox="0 0 16 16"><use href="#t-zvol" width="16" height="16"/></svg>
<div class="t" style="left:102px;top:268.4px;color:#000">Create zvol</div>
<svg class="ic" style="left:63px;top:289.9px" width="16" height="16" viewBox="0 0 16 16"><use href="#t-key" width="16" height="16"/></svg>
<div class="t" style="left:83px;top:290.4px;color:#000">Change Permissions</div>
<svg class="ic" style="left:63px;top:311.9px" width="16" height="16" viewBox="0 0 16 16"><use href="#t-dataset" width="16" height="16"/></svg>
<div class="t" style="left:83px;top:312.4px;color:#000">Create Dataset</div>
<svg class="ic" style="left:63px;top:333.9px" width="16" height="16" viewBox="0 0 16 16"><use href="#t-zvol" width="16" height="16"/></svg>
<div class="t" style="left:83px;top:334.4px;color:#000">Create zvol</div>
<div class="a" style="left:27px;top:357.9px;width:11px;height:11px;border:1px solid #b6c3d9;background:linear-gradient(#fff,#e9eef5);box-shadow:1px 1px 1px rgba(0,0,0,.08)"></div>
<svg class="ic" style="left:27px;top:357.9px" width="11" height="11"><path d="M3 5.5 h5 M5.5 3 v5" stroke="#5774a6" stroke-width="1"/></svg>
<svg class="ic" style="left:44px;top:355.9px" width="16" height="16" viewBox="0 0 16 16"><use href="#t-disk" width="16" height="16"/></svg>
<div class="t" style="left:64px;top:356.4px;color:#000">/mnt/Jails</div>
<svg class="ic" style="left:44px;top:377.9px" width="16" height="16" viewBox="0 0 16 16"><use href="#t-vm" width="16" height="16"/></svg>
<div class="t" style="left:64px;top:378.4px;color:#000">Volume Manager</div>
<svg class="ic" style="left:44px;top:399.9px" width="16" height="16" viewBox="0 0 16 16"><use href="#t-import" width="16" height="16"/></svg>
<div class="t" style="left:64px;top:400.4px;color:#000">Import Disk</div>
<svg class="ic" style="left:44px;top:421.9px" width="16" height="16" viewBox="0 0 16 16"><use href="#t-import" width="16" height="16"/></svg>
<div class="t" style="left:64px;top:422.4px;color:#000">Import Volume</div>
<svg class="ic" style="left:44px;top:443.9px" width="16" height="16" viewBox="0 0 16 16"><use href="#t-view" width="16" height="16"/></svg>
<div class="t" style="left:64px;top:444.4px;color:#000">View Disks</div>
<svg class="ic" style="left:44px;top:465.9px" width="16" height="16" viewBox="0 0 16 16"><use href="#t-view" width="16" height="16"/></svg>
<div class="t" style="left:64px;top:466.4px;color:#000">View Volumes</div>
<div class="a" style="left:8px;top:489.9px;width:11px;height:11px;border:1px solid #b6c3d9;background:linear-gradient(#fff,#e9eef5);box-shadow:1px 1px 1px rgba(0,0,0,.08)"></div>
<svg class="ic" style="left:8px;top:489.9px" width="11" height="11"><path d="M3 5.5 h5 M5.5 3 v5" stroke="#5774a6" stroke-width="1"/></svg>
<svg class="ic" style="left:25px;top:487.9px" width="16" height="16" viewBox="0 0 16 16"><use href="#t-periodic" width="16" height="16"/></svg>
<div class="t" style="left:45px;top:488.4px;color:#000">Periodic Snapshot Tasks</div>
<div class="a" style="left:8px;top:511.9px;width:11px;height:11px;border:1px solid #b6c3d9;background:linear-gradient(#fff,#e9eef5);box-shadow:1px 1px 1px rgba(0,0,0,.08)"></div>
<svg class="ic" style="left:8px;top:511.9px" width="11" height="11"><path d="M3 5.5 h5 M5.5 3 v5" stroke="#5774a6" stroke-width="1"/></svg>
<svg class="ic" style="left:25px;top:509.9px" width="16" height="16" viewBox="0 0 16 16"><use href="#t-repl" width="16" height="16"/></svg>
<div class="t" style="left:45px;top:510.4px;color:#000">Replication Tasks</div>
<div class="t" style="left:29px;top:532.4px;color:#000">Resilver Priority</div>
<div class="a" style="left:8px;top:555.9px;width:11px;height:11px;border:1px solid #b6c3d9;background:linear-gradient(#fff,#e9eef5);box-shadow:1px 1px 1px rgba(0,0,0,.08)"></div>
<svg class="ic" style="left:8px;top:555.9px" width="11" height="11"><path d="M3 5.5 h5 M5.5 3 v5" stroke="#5774a6" stroke-width="1"/></svg>
<svg class="ic" style="left:25px;top:553.9px" width="16" height="16" viewBox="0 0 16 16"><use href="#t-scrubs" width="16" height="16"/></svg>
<div class="t" style="left:45px;top:554.4px;color:#000">Scrubs</div>
<svg class="ic" style="left:25px;top:575.9px" width="16" height="16" viewBox="0 0 16 16"><use href="#t-snap" width="16" height="16"/></svg>
<div class="t" style="left:45px;top:576.4px;color:#000">Snapshots</div>
</div>
<div class="a" style="left:257px;top:122px;width:1px;height:623px;background:#b5bdc9"></div>
<div class="a" style="left:257px;top:744px;width:1159px;height:1px;background:#b9c1cd"></div>
<div class="a" style="left:257px;top:122px;width:74px;height:29px;border:1px solid #b5bdc9;border-bottom:none;border-radius:2px 2px 0 0;background:linear-gradient(#f4f8fc 0px,#d4e5f6 2px,#dceaf8 4px,#fff 8px)"></div>
<div class="a" style="left:330px;top:150px;width:1086px;height:1px;background:#b5bdc9"></div>
<div class="t" style="left:234px;width:120px;text-align:center;top:132px">Jails</div>
<div class="a" style="left:258px;top:180px;width:1158px;height:1px;background:#c4cad3"></div>
<div class="a" style="left:329px;top:153px;width:68px;height:23px;border:1px solid #769dcc;border-radius:2px;background:linear-gradient(#d9eaf9,#cde2f6)"></div>
<div class="t" style="left:234px;width:120px;text-align:center;top:157px;color:#333">Jails</div>
<div class="t" style="left:303px;width:120px;text-align:center;top:157px;color:#000">Storage</div>
<div class="t" style="left:404px;top:157px;color:#333">Templates</div>
<div class="t" style="left:471px;top:157px;color:#333">Configuration</div>
<div class="a" style="left:260px;top:183px;width:83px;height:27px;border:1px solid #7fa2cc;border-radius:4px;background:linear-gradient(#f4f9fe 0px,#bed7f1 3px,#d2e4f6 50%,#ecf4fc 100%);box-shadow:0 1px 1px rgba(0,0,0,.1)"></div>
<div class="t" style="left:241px;width:120px;text-align:center;top:188px;color:#5a5a5a;font-weight:bold;font-size:10.5px;letter-spacing:0.2px">Add Storage</div>
<div class="a" style="left:258px;top:241px;width:1158px;height:1px;background:#a9a9a9"></div>
<div class="a" style="left:258px;top:242px;width:1158px;height:20px;background:linear-gradient(#e9eef4,#d9e2ec)"></div>
<div class="a" style="left:258px;top:261px;width:1143px;height:1px;background:#a9a9a9"></div>
<div class="a" style="left:258px;top:241px;width:1px;height:503px;background:#a9a9a9"></div>
<div class="a" style="left:258px;top:743px;width:1158px;height:1px;background:#a9a9a9"></div>
<div class="a" style="left:487px;top:242px;width:1px;height:19px;background:#a9a9a9"></div>
<div class="a" style="left:715px;top:242px;width:1px;height:19px;background:#a9a9a9"></div>
<div class="a" style="left:943px;top:242px;width:1px;height:19px;background:#a9a9a9"></div>
<div class="a" style="left:1171px;top:242px;width:1px;height:19px;background:#a9a9a9"></div>
<div class="a" style="left:1400px;top:242px;width:1px;height:19px;background:#a9a9a9"></div>
<div class="t" style="left:262px;top:245px">Jail</div>
<div class="t" style="left:491px;top:245px">Source</div>
<div class="t" style="left:719px;top:245px">Destination</div>
<div class="t" style="left:947px;top:245px">Mounted?</div>
<div class="t" style="left:1175px;top:245px">Read-Only</div>
<div class="a" style="left:1401px;top:262px;width:15px;height:481px;background:#f0f0f0"></div>
<svg class="ic" style="left:1406px;top:269px" width="8" height="5"><path d="M0 4.5 L4 0.5 L8 4.5Z" fill="#a3a3a3"/></svg>
<svg class="ic" style="left:1406px;top:731px" width="8" height="5"><path d="M0 0.5 L4 4.5 L8 0.5Z" fill="#a3a3a3"/></svg>
<div class="a" style="left:259px;top:262px;width:1142px;height:20px;background:#fff;border-left:1px solid #f2dfcc;border-right:1px solid #f2dfcc;border-bottom:1px solid #f2dfcc"></div>
<div class="a" style="left:487px;top:262px;width:1px;height:19px;background:#f2dfcc"></div>
<div class="a" style="left:715px;top:262px;width:1px;height:19px;background:#f2dfcc"></div>
<div class="a" style="left:943px;top:262px;width:1px;height:19px;background:#f2dfcc"></div>
<div class="a" style="left:1171px;top:262px;width:1px;height:19px;background:#f2dfcc"></div>
<div class="t" style="left:262px;top:265px">PLEXPASS</div>
<div class="t" style="left:491px;top:265px">/mnt/Storage/media</div>
<div class="t" style="left:719px;top:265px">/mnt/Storage/media</div>
<div class="t" style="left:947px;top:265px">true</div>
<div class="t" style="left:1175px;top:265px">false</div>
<div class="a" style="left:259px;top:282px;width:1142px;height:20px;background:#fff;border-left:1px solid #f2dfcc;border-right:1px solid #f2dfcc;border-bottom:1px solid #f2dfcc"></div>
<div class="a" style="left:487px;top:282px;width:1px;height:19px;background:#f2dfcc"></div>
<div class="a" style="left:715px;top:282px;width:1px;height:19px;background:#f2dfcc"></div>
<div class="a" style="left:943px;top:282px;width:1px;height:19px;background:#f2dfcc"></div>
<div class="a" style="left:1171px;top:282px;width:1px;height:19px;background:#f2dfcc"></div>
<div class="t" style="left:262px;top:285px">PLEXPASS</div>
<div class="t" style="left:491px;top:285px">/mnt/Storage/media</div>
<div class="t" style="left:719px;top:285px">/media</div>
<div class="t" style="left:947px;top:285px">true</div>
<div class="t" style="left:1175px;top:285px">false</div>
<div class="a" style="left:0;top:745px;width:1416px;height:1px;background:#363636"></div>
<div class="a" style="left:0;top:746px;width:1416px;height:1px;background:#8f8f8f"></div>
<div class="a" style="left:0;top:747px;width:1416px;height:8px;background:linear-gradient(#545454,#505050)"></div></body></html>
